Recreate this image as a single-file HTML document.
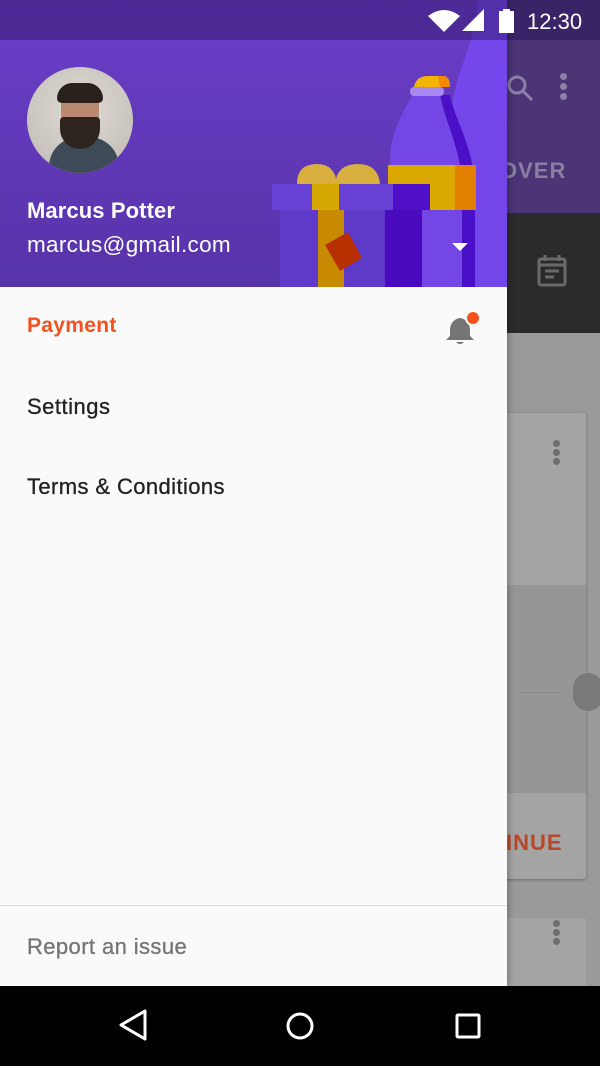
<!DOCTYPE html>
<html><head><meta charset="utf-8"><style>
*{margin:0;padding:0;box-sizing:border-box}
body{width:600px;height:1066px;position:relative;overflow:hidden;font-family:"Liberation Sans",Roboto,sans-serif;background:#9b9b9b}
.abs{position:absolute}
</style></head><body>
<div class="abs" style="left:0;top:0;width:600px;height:40px;background:#3a2468"></div>
<div class="abs" style="left:0;top:40px;width:600px;height:173px;background:#4b3577"></div>
<div class="abs" style="left:0;top:213px;width:600px;height:120px;background:#2b2b2b"></div>
<div class="abs" style="left:0;top:333px;width:600px;height:653px;background:#9a9a9a"></div>
<div class="abs" style="left:440px;top:413px;width:146px;height:466px;background:#a4a4a4;border-radius:3px;box-shadow:0 1px 3px rgba(0,0,0,.3)"></div>
<div class="abs" style="left:440px;top:585px;width:146px;height:208px;background:#969696"></div>
<div class="abs" style="left:520px;top:692px;width:40px;height:1px;background:#888"></div>
<div class="abs" style="left:573px;top:673px;width:30px;height:38px;border-radius:19px;background:#7a7a7a"></div>
<div class="abs" style="left:440px;top:918px;width:146px;height:80px;background:#a4a4a4;border-radius:3px"></div>
<div class="abs" style="left:506px;top:830px;color:#b8482a;font-weight:bold;font-size:22px;letter-spacing:1px">INUE</div>
<div class="abs" style="left:500px;top:158px;color:#8a7fa2;font-weight:bold;font-size:22px;letter-spacing:1px">OVER</div>
<svg class="abs" style="left:500px;top:68px" width="40" height="40"><circle cx="17" cy="17" r="8" fill="none" stroke="#8b80a5" stroke-width="3"/><path d="M23 23l9 9" stroke="#8b80a5" stroke-width="3"/></svg>
<div class="abs" style="left:560px;top:73px;width:7px;height:7px;border-radius:50%;background:#8b80a5;box-shadow:0 10px 0 #8b80a5,0 20px 0 #8b80a5"></div>
<svg class="abs" style="left:536px;top:254px" width="34" height="36"><rect x="3" y="5" width="26" height="26" rx="2" fill="none" stroke="#6a6a6a" stroke-width="3"/><path d="M3 11h26M9 1v6M23 1v6M9 17h14M9 23h9" stroke="#6a6a6a" stroke-width="3"/></svg>
<div class="abs" style="left:553px;top:440px;width:7px;height:7px;border-radius:50%;background:#6e6e6e;box-shadow:0 9px 0 #6e6e6e,0 18px 0 #6e6e6e"></div>
<div class="abs" style="left:553px;top:920px;width:7px;height:7px;border-radius:50%;background:#6e6e6e;box-shadow:0 9px 0 #6e6e6e,0 18px 0 #6e6e6e"></div>
<!-- drawer -->
<div class="abs" style="left:0;top:0;width:507px;height:986px;background:#fafafa;box-shadow:2px 0 6px rgba(0,0,0,.25)"></div>
<div class="abs" style="left:0;top:0;width:507px;height:287px;background:linear-gradient(#6b3ec9,#5733a8);overflow:hidden">
<svg class="abs" style="left:0;top:0" width="507" height="287">
<path d="M480 0 L507 0 L507 287 L470 287 C470 250 480 230 470 200 C460 170 440 150 455 90 C462 60 475 40 478 0 Z" fill="#7748f0" opacity=".9"/>
<path d="M390 160 C390 130 405 110 412 95 L450 95 C455 115 470 140 470 170 L470 287 L388 287 Z" fill="#7446e6"/>
<path d="M440 95 C445 120 460 150 462 180 L462 287 L475 287 L475 180 C470 140 455 120 450 95Z" fill="#4a10c8"/>
<rect x="388" y="165" width="88" height="45" fill="#dba800"/>
<rect x="455" y="165" width="21" height="45" fill="#e28000"/>
<rect x="410" y="87" width="34" height="9" rx="4" fill="#a888ee"/>
<path d="M414 87 Q416 76 428 76 L445 76 Q450 78 450 87Z" fill="#f4b400"/>
<path d="M438 76 L445 76 Q450 78 450 87 L440 87Z" fill="#f08800"/>
<path d="M297 184 Q297 164 317 164 Q335 164 337 184Z M335 184 Q337 164 358 164 Q378 164 380 184Z" fill="#d9b040"/>
<rect x="272" y="184" width="158" height="26" fill="#6740d4"/>
<rect x="312" y="184" width="27" height="26" fill="#d4a800"/>
<rect x="393" y="184" width="37" height="26" fill="#4f10c8"/>
<rect x="280" y="210" width="142" height="77" fill="#5d3ac8"/>
<rect x="318" y="210" width="26" height="77" fill="#c88a00"/>
<rect x="385" y="210" width="37" height="77" fill="#4a0bbd"/>
<path d="M325 245 L348 232 L362 258 L340 271Z" fill="#b83000"/>
<path d="M452 243 L468 243 L460 251Z" fill="#fff"/>
</svg>
<div class="abs" style="left:0;top:0;width:507px;height:40px;background:rgba(40,20,90,.45)"></div>
</div>
<!-- status bar icons -->
<svg class="abs" style="left:426px;top:6px" width="160" height="30">
<path d="M2 10 Q18 -2 34 10 L18 26 Z" fill="#fff"/>
<path d="M36 25 L58 3 L58 25 Z" fill="#fff"/>
<rect x="73" y="5" width="15" height="22" fill="#fff"/><rect x="77" y="3" width="7" height="3" fill="#fff"/>
<text x="101" y="23" fill="#fff" font-size="22" font-family="Liberation Sans">12:30</text>
</svg>
<!-- avatar -->
<div class="abs" style="left:27px;top:67px;width:106px;height:106px;border-radius:50%;background:radial-gradient(circle at 50% 40%,#e0dcd6,#bdb8b0);overflow:hidden">
<div class="abs" style="left:22px;top:70px;width:70px;height:50px;border-radius:30px 30px 0 0;background:#3e4a58"></div>
<div class="abs" style="left:34px;top:24px;width:38px;height:56px;border-radius:18px 18px 22px 22px;background:#b88a70"></div>
<div class="abs" style="left:30px;top:16px;width:46px;height:20px;border-radius:20px 20px 6px 6px;background:#2a211c"></div>
<div class="abs" style="left:33px;top:50px;width:40px;height:32px;border-radius:4px 4px 20px 20px;background:#2e241e"></div>
</div>
<div class="abs" style="left:27px;top:198px;color:#fff;font-size:22px;font-weight:bold;letter-spacing:.1px">Marcus Potter</div>
<div class="abs" style="left:27px;top:232px;color:#fff;font-size:22.5px;letter-spacing:.3px">marcus@gmail.com</div>
<div class="abs" style="left:27px;top:314px;color:#f4511e;font-size:21px;font-weight:bold;letter-spacing:.3px">Payment</div>
<svg class="abs" style="left:444px;top:308px" width="40" height="40"><path d="M16 10 C9 11 6 17 6 22 L6 28 L2 32 L30 32 L26 28 L26 22 C26 17 23 11 16 10Z" fill="#757575"/><path d="M12 34 Q16 38 20 34Z" fill="#757575"/><circle cx="29" cy="10" r="7" fill="#f4511e" stroke="#fafafa" stroke-width="2"/></svg>
<div class="abs" style="left:27px;top:394px;color:#212121;font-size:22px;letter-spacing:.5px;-webkit-text-stroke:.3px #212121">Settings</div>
<div class="abs" style="left:27px;top:474px;color:#212121;font-size:22px;letter-spacing:.4px;-webkit-text-stroke:.3px #212121">Terms &amp; Conditions</div>
<div class="abs" style="left:0;top:905px;width:507px;height:1px;background:#dcdcdc"></div>
<div class="abs" style="left:27px;top:934px;color:#757575;font-size:22px;letter-spacing:.4px;-webkit-text-stroke:.3px #757575">Report an issue</div>
<div class="abs" style="left:0;top:986px;width:600px;height:80px;background:#000"></div>
<svg class="abs" style="left:0;top:986px" width="600" height="80">
<path d="M145 25 L121 39 L145 53Z" fill="none" stroke="#fff" stroke-width="3" stroke-linejoin="round"/>
<circle cx="300" cy="40" r="12" fill="none" stroke="#fff" stroke-width="3"/>
<rect x="457" y="29" width="22" height="22" rx="1" fill="none" stroke="#fff" stroke-width="3"/>
</svg>
</body></html>
